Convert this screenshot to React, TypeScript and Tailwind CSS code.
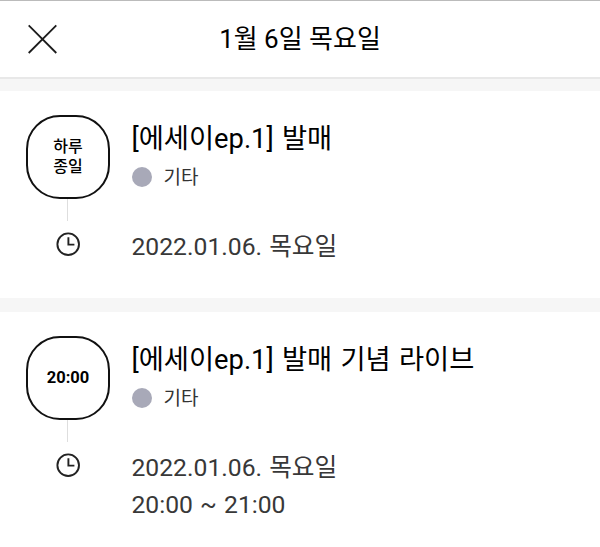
import React from 'react'

type ScheduleItem = {
  id: number
  badge: string[]
  isAllDay: boolean
  title: string
  category: string
  details: string[]
}

const schedules: ScheduleItem[] = [
  {
    id: 1,
    badge: ['하루', '종일'],
    isAllDay: true,
    title: '[에세이ep.1] 발매',
    category: '기타',
    details: ['2022.01.06. 목요일'],
  },
  {
    id: 2,
    badge: ['20:00'],
    isAllDay: false,
    title: '[에세이ep.1] 발매 기념 라이브',
    category: '기타',
    details: ['2022.01.06. 목요일', '20:00 ~ 21:00'],
  },
]

function CloseIcon() {
  return (
    <svg width="30" height="30" viewBox="0 0 30 30" fill="none">
      <path
        d="M1.7 1.4L29.3 29M29.3 1.4L1.7 29"
        stroke="#1c1c1c"
        strokeWidth="1.8"
      />
    </svg>
  )
}

function ClockIcon() {
  return (
    <svg width="24" height="24" viewBox="0 0 24 24" fill="none">
      <circle cx="12.2" cy="12.2" r="10.8" stroke="#222" strokeWidth="1.9" />
      <path d="M12.4 5.2V12.6H18.4" stroke="#222" strokeWidth="1.9" />
    </svg>
  )
}

function ScheduleCard({ badge, isAllDay, title, category, details }: ScheduleItem) {
  return (
    <section className="flex bg-white pl-[26px]">
      <div className="flex w-[84px] flex-col items-center pt-6">
        <div
          className={
            isAllDay
              ? 'flex size-[84px] shrink-0 flex-col items-center justify-center rounded-[34px] border-2 border-[#111] text-[16px] font-medium leading-5 text-black'
              : 'flex size-[84px] shrink-0 flex-col items-center justify-center rounded-[34px] border-2 border-[#111] text-[16.5px] font-bold leading-5 text-black'
          }
        >
          {badge.map((line) => (
            <span key={line}>{line}</span>
          ))}
        </div>
        <div className="mr-px h-[22px] w-px bg-[#dedede]" />
        <div className="mt-[11px]">
          <ClockIcon />
        </div>
      </div>
      <div className="ml-[21.5px] flex-1 whitespace-nowrap pt-[29px]">
        <h2 className="text-[27.3px] leading-[38px] text-black [word-spacing:1.5px]">{title}</h2>
        <div className="mt-[5px] flex h-7 items-center">
          <span className="size-5 rounded-full bg-[#a8a9b8]" />
          <span className="ml-3 pt-0.5 text-[19px] text-[#333]">{category}</span>
        </div>
        <div className="mt-[37px] text-[24.7px] leading-[37px] text-[#383838] [word-spacing:1px]">
          {details.map((line) => (
            <p key={line}>{line}</p>
          ))}
        </div>
      </div>
    </section>
  )
}

export default function App() {
  return (
    <main className="flex h-[547px] w-[600px] flex-col overflow-hidden bg-white font-['Roboto','Noto_Sans_CJK_KR',sans-serif]">
      <header className="grid h-[79px] shrink-0 grid-cols-[1fr_auto_1fr] items-center border-t border-b-2 border-t-[#bbb] border-b-[#e8e8e8] bg-white">
        <button type="button" aria-label="닫기" className="ml-[27px] w-[30px]">
          <CloseIcon />
        </button>
        <h1 className="text-[26px] leading-9 text-black">1월 6일 목요일</h1>
      </header>
      <div className="h-3 shrink-0 bg-[#f6f6f6]" />
      <div className="h-[207px] shrink-0">
        <ScheduleCard {...schedules[0]} />
      </div>
      <div className="h-[14px] shrink-0 bg-[#f6f6f6]" />
      <ScheduleCard {...schedules[1]} />
    </main>
  )
}
